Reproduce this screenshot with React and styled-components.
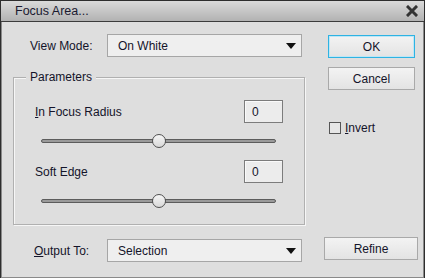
import styled, { createGlobalStyle } from 'styled-components'

const Global = createGlobalStyle`
  body {
    margin: 0;
    font-family: "Liberation Sans", Arial, sans-serif;
    font-size: 12px;
    color: #14142a;
  }
`

const Window = styled.div`
  width: 425px;
  height: 278px;
  box-sizing: border-box;
  border: 1px solid #2e2e2e;
  background: #dedede;
  display: flex;
  flex-direction: column;
`

const TitleBar = styled.div`
  height: 20px;
  flex-shrink: 0;
  border-bottom: 1px solid #3c3c3c;
  background: linear-gradient(#dadada, #b2b2b2);
  display: flex;
  align-items: center;
  justify-content: space-between;
  padding: 0 6px 0 14px;
  font-size: 12.5px;
  color: #1a1a30;
`

const Body = styled.div`
  flex: 1;
  display: flex;
  gap: 23px;
  padding: 12px 0 15px 11px;
  border-left: 1px solid #8a8a8a;
  border-right: 1px solid #8a8a8a;
  border-bottom: 1px solid #8a8a8a;
`

const LeftColumn = styled.div`
  width: 292px;
  display: flex;
  flex-direction: column;
`

const RightColumn = styled.div`
  flex: 1;
  display: flex;
  flex-direction: column;
  align-items: flex-start;
  padding-top: 1px;
  padding-bottom: 2px;
`

const FieldRow = styled.div`
  height: 23px;
  display: flex;
  align-items: center;
  padding-left: ${(p) => p.$indent}px;
  margin-top: ${(p) => p.$top || 0}px;
`

const Label = styled.span`
  width: ${(p) => p.$width}px;
  flex-shrink: 0;
`

const Select = styled.div`
  width: 195px;
  height: 23px;
  box-sizing: border-box;
  border: 1px solid #a6a6a6;
  background: #efefef;
  display: flex;
  align-items: center;
  justify-content: space-between;
  padding: 0 5px 0 10px;
`

const Group = styled.div`
  position: relative;
  margin-top: 20px;
  border: 1px solid #b0b0b0;
  box-shadow: 1px 1px 0 #f6f6f6, inset 1px 1px 0 #f6f6f6;
  padding: 22px 21px 16px 21px;
  display: flex;
  flex-direction: column;
  gap: 12px;
`

const Legend = styled.span`
  position: absolute;
  top: -8px;
  left: 12px;
  padding: 0 4px;
  background: #dedede;
  line-height: 14px;
`

const Param = styled.div`
  display: flex;
  flex-direction: column;
  gap: 11px;
`

const ParamHead = styled.div`
  height: 23px;
  display: flex;
  align-items: center;
  justify-content: space-between;
`

const NumberBox = styled.div`
  width: 39px;
  height: 23px;
  box-sizing: border-box;
  border: 1px solid #7c7c7c;
  box-shadow: inset 1px 1px 0 #fafafa;
  background: #ececec;
  display: flex;
  align-items: center;
  padding-left: 7px;
`

const SliderArea = styled.div`
  height: 14px;
  display: flex;
  align-items: center;
  padding: 0 7px 0 6px;
`

const Track = styled.div`
  position: relative;
  flex: 1;
  height: 4px;
  box-sizing: border-box;
  border: 1px solid #5c5c5c;
  border-radius: 3px;
  background: #9a9a9a;
`

const Thumb = styled.div`
  position: absolute;
  top: 50%;
  width: 14px;
  height: 14px;
  box-sizing: border-box;
  border: 1px solid #505050;
  border-radius: 50%;
  background: linear-gradient(#f6f6f6, #d8d8d8);
  transform: translate(-50%, -50%);
`

const Button = styled.div`
  width: ${(p) => p.$width || 87}px;
  height: 23px;
  box-sizing: border-box;
  border: 1px solid ${(p) => (p.$primary ? '#2eb3e3' : '#a9a9a9')};
  box-shadow: ${(p) => (p.$primary ? 'inset 0 0 0 1px #bfe6f5' : 'none')};
  background: linear-gradient(#f3f3f3, #e3e3e3);
  display: flex;
  align-items: center;
  justify-content: center;
  margin-top: ${(p) => p.$top || 0}px;
  margin-left: ${(p) => p.$left || 0}px;
`

const RefineButton = styled(Button)`
  margin-top: auto;
`

const CheckRow = styled.label`
  display: flex;
  align-items: center;
  gap: 4px;
  margin-top: 31px;
  margin-left: 1px;
`

const CheckBox = styled.span`
  width: 12px;
  height: 12px;
  box-sizing: border-box;
  border: 1px solid #555;
  background: #e6e6e6;
`

const Arrow = () => (
  <svg width="10" height="6" viewBox="0 0 10 6">
    <polygon points="0,0 10,0 5,6" fill="#111" />
  </svg>
)

const CloseIcon = () => (
  <svg width="12" height="12" viewBox="0 0 12 12">
    <path d="M2 2 L10 10 M10 2 L2 10" stroke="#333" strokeWidth="3" strokeLinecap="square" />
  </svg>
)

function Slider({ value }) {
  return (
    <SliderArea>
      <Track>
        <Thumb style={{ left: `${value}%` }} />
      </Track>
    </SliderArea>
  )
}

export default function App() {
  return (
    <>
      <Global />
      <Window>
        <TitleBar>
          <span>Focus Area...</span>
          <CloseIcon />
        </TitleBar>
        <Body>
          <LeftColumn>
            <FieldRow $indent={17}>
              <Label $width={77}>View Mode:</Label>
              <Select>
                <span>On White</span>
                <Arrow />
              </Select>
            </FieldRow>

            <Group>
              <Legend>Parameters</Legend>
              <Param>
                <ParamHead>
                  <span>
                    <u>I</u>n Focus Radius
                  </span>
                  <NumberBox>0</NumberBox>
                </ParamHead>
                <Slider value={50} />
              </Param>
              <Param>
                <ParamHead>
                  <span>Soft Edge</span>
                  <NumberBox>0</NumberBox>
                </ParamHead>
                <Slider value={50} />
              </Param>
            </Group>

            <FieldRow $indent={21} $top={14}>
              <Label $width={73}>
                <u>O</u>utput To:
              </Label>
              <Select>
                <span>Selection</span>
                <Arrow />
              </Select>
            </FieldRow>
          </LeftColumn>

          <RightColumn>
            <Button $primary>OK</Button>
            <Button $top={9}>Cancel</Button>
            <CheckRow>
              <CheckBox />
              <span>
                <u>I</u>nvert
              </span>
            </CheckRow>
            <RefineButton $width={94} $left={-4}>
              Refine
            </RefineButton>
          </RightColumn>
        </Body>
      </Window>
    </>
  )
}
